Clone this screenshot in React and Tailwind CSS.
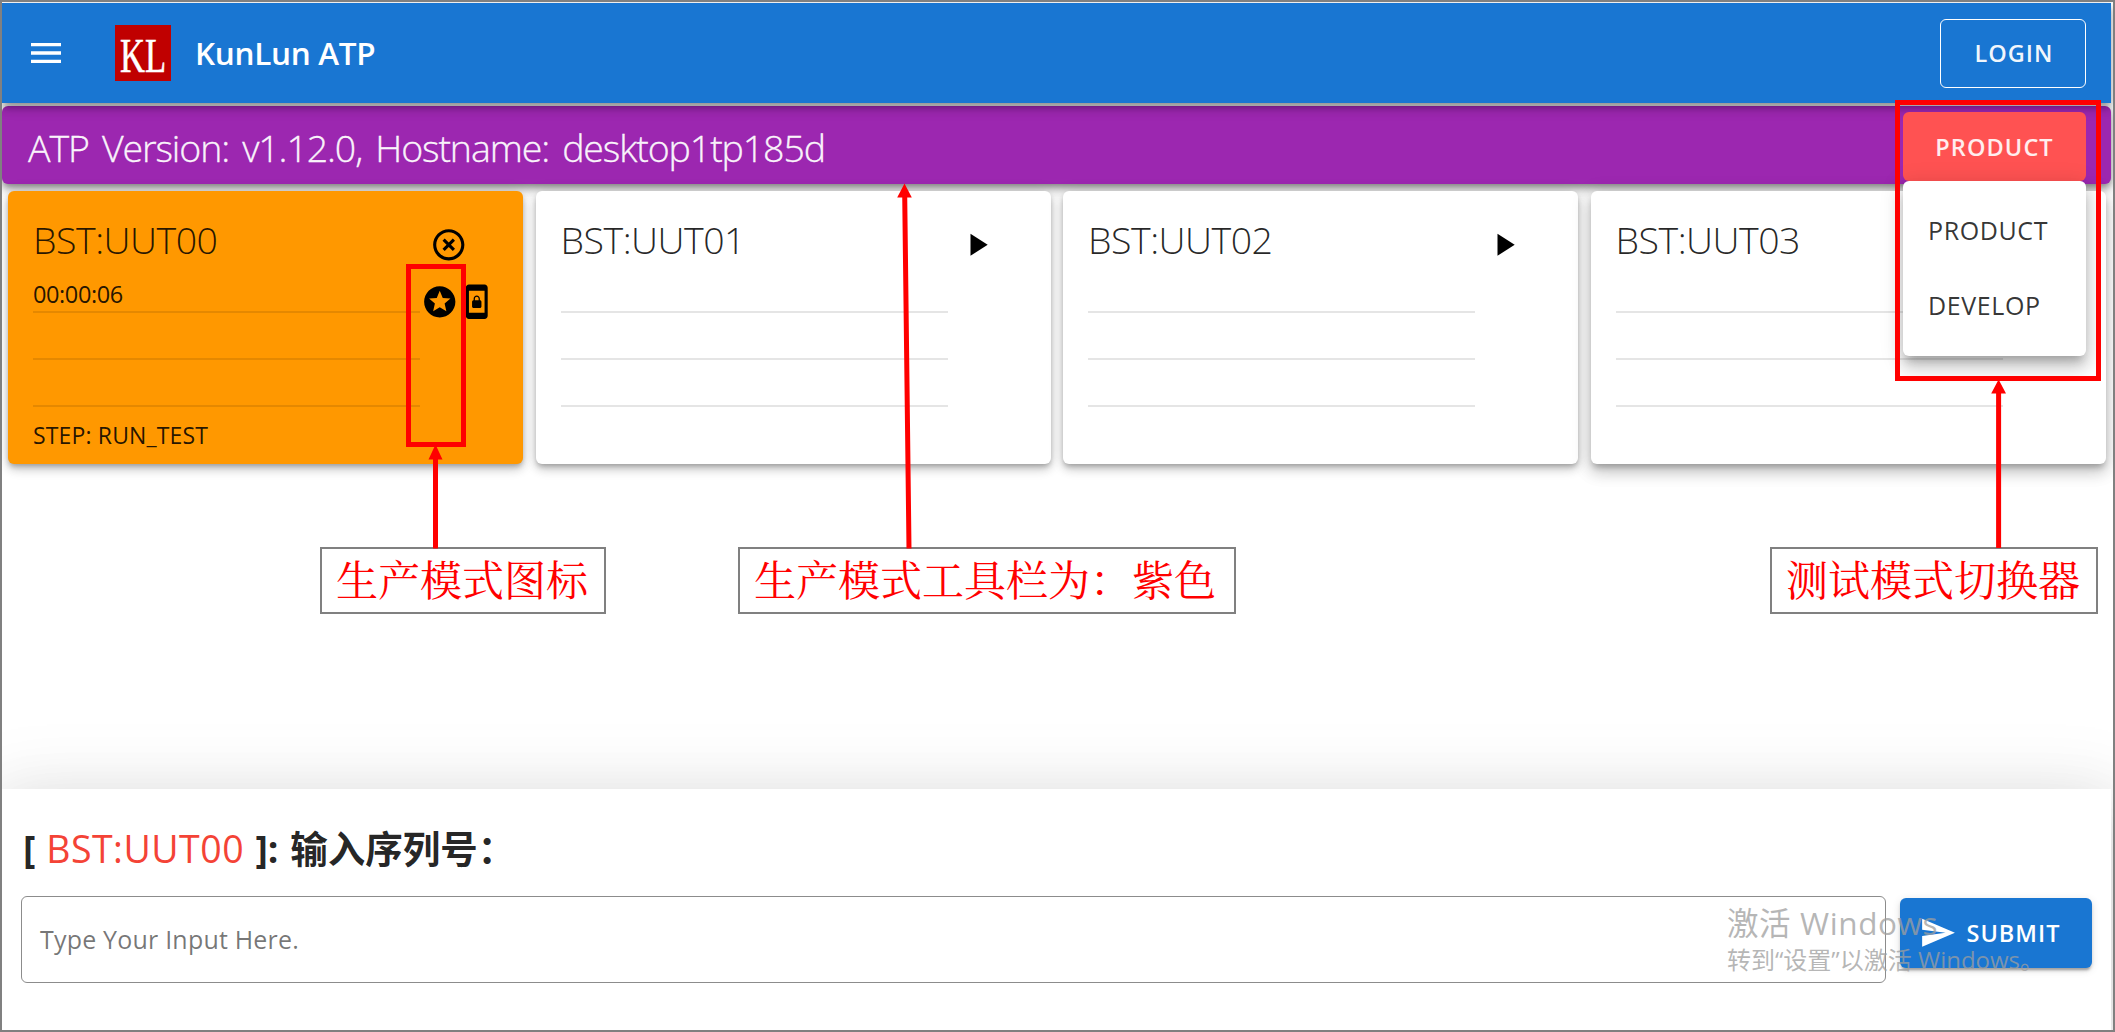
import React from "react";

function Icon({ d, className }) {
  return (
    <svg viewBox="0 0 24 24" className={className} fill="currentColor">
      <path d={d} />
    </svg>
  );
}

const PATHS = {
  menu: "M3 18h18v-2H3v2zm0-5h18v-2H3v2zm0-7v2h18V6H3z",
  cancel:
    "M14.59 8 12 10.59 9.41 8 8 9.41 10.59 12 8 14.59 9.41 16 12 13.41 14.59 16 16 14.59 13.41 12 16 9.41 14.59 8zM12 2C6.47 2 2 6.47 2 12s4.47 10 10 10 10-4.47 10-10S17.53 2 12 2zm0 18c-4.41 0-8-3.59-8-8s3.59-8 8-8 8 3.59 8 8-3.59 8-8 8z",
  play: "M8 5v14l11-7z",
  stars:
    "M11.99 2C6.47 2 2 6.48 2 12s4.47 10 9.99 10C17.52 22 22 17.52 22 12S17.52 2 11.99 2zm4.24 16L12 15.45 7.77 18l1.12-4.81-3.73-3.23 4.92-.42L12 5l1.92 4.53 4.92.42-3.73 3.23L16.23 18z",
  lock: "M10 16h4c.55 0 1-.45 1-1v-3c0-.55-.45-1-1-1v-1c0-1.11-.9-2-2-2-1.11 0-2 .9-2 2v1c-.55 0-1 .45-1 1v3c0 .55.45 1 1 1zm.8-6c0-.66.54-1.2 1.2-1.2s1.2.54 1.2 1.2v1h-2.4v-1zM17 1H7c-1.1 0-2 .9-2 2v18c0 1.1.9 2 2 2h10c1.1 0 2-.9 2-2V3c0-1.1-.9-2-2-2zm0 18H7V5h10v14z",
  send: "M2.01 21 23 12 2.01 3 2 10l15 2-15 2z",
};

const SLOTS = [
  { name: "BST:UUT00", running: true, time: "00:00:06", step: "STEP: RUN_TEST" },
  { name: "BST:UUT01" },
  { name: "BST:UUT02" },
  { name: "BST:UUT03", raised: true },
];

function SlotCard({ slot }) {
  const shadow = slot.raised
    ? "shadow-[0_5px_6px_-2px_rgba(0,0,0,0.26),0_8px_15px_1px_rgba(0,0,0,0.15),0_4px_20px_2px_rgba(0,0,0,0.11)]"
    : "shadow-[0_3px_5px_-1px_rgba(0,0,0,0.24),0_6px_8px_rgba(0,0,0,0.14),0_2px_16px_rgba(0,0,0,0.12)]";
  return (
    <div className={`h-[273px] w-[515px] rounded-[6px] pl-[25px] ${shadow} ${slot.running ? "bg-[#ff9800]" : "bg-white"}`}>
      <div className="flex h-[88px]">
        <div className="w-[388px] pt-[24px] text-[37.5px] leading-[50px] font-light tracking-[-0.5px] whitespace-nowrap text-black/85">
          {slot.name}
        </div>
        <Icon d={slot.running ? PATHS.cancel : PATHS.play} className="mt-[35px] ml-[9px] size-[37.5px]" />
      </div>
      <div className="flex">
        <div className="w-[387px]">
          <div className="h-[34px] border-b-2 border-black/10 text-[23.5px] leading-[30px] tracking-[-0.4px] text-black/87">
            {slot.time}
          </div>
          <div className="h-[47px] border-b-2 border-black/10" />
          <div className="h-[47px] border-b-2 border-black/10" />
          <div className="pt-[12px] text-[23px] leading-[32px] tracking-[0.15px] text-black/87">{slot.step}</div>
        </div>
        {slot.running && (
          <div className="flex pt-[4px] pl-[0.5px]">
            <Icon d={PATHS.stars} className="size-[37.5px]" />
            <Icon d={PATHS.lock} className="size-[37.5px]" />
          </div>
        )}
      </div>
    </div>
  );
}

function Callout({ className, children }) {
  return (
    <div
      className={`absolute top-[545px] flex h-[67px] items-center border-2 border-[#808080] bg-white pb-[5px] pl-[14px] font-['Noto_Serif_CJK_SC','Noto_Sans_CJK_SC',serif] text-[42px] leading-none whitespace-nowrap text-[#ff0000] ${className}`}
    >
      {children}
    </div>
  );
}

export default function App() {
  return (
    <div className="relative flex h-[1032px] w-[2115px] flex-col overflow-hidden border-2 border-[#808080] bg-white pr-[2px] font-['Open_Sans','Noto_Sans_CJK_SC',sans-serif]">
      <header className="relative z-10 mt-[1px] flex h-[100px] shrink-0 items-center bg-[#1976d2] pl-[24px] text-white shadow-[0_3px_6px_-1.5px_rgba(0,0,0,0.24),0_6px_8px_rgba(0,0,0,0.16),0_1.5px_16px_rgba(0,0,0,0.14)]">
        <Icon d={PATHS.menu} className="size-[40px]" />
        <div className="ml-[49px] flex size-[56px] items-center justify-center bg-[#c00000]">
          <span className="scale-x-72 pt-[5px] font-['Liberation_Serif',serif] text-[48px] leading-none [-webkit-text-stroke:0.6px_white]">
            KL
          </span>
        </div>
        <h1 className="ml-[24px] text-[31.5px] leading-[50px] font-semibold tracking-[-0.3px]">KunLun ATP</h1>
        <button className="mr-[25px] ml-auto h-[69px] w-[146px] rounded-[6px] border border-white pt-[2px] pl-[2px] text-[23.5px] font-semibold tracking-[1px] text-white/95">
          LOGIN
        </button>
      </header>

      <section className="mt-[3px] flex h-[78px] shrink-0 items-center rounded-[6px] bg-[#9c27b0] pl-[26px] shadow-[0_3px_6px_-1px_rgba(0,0,0,0.3),0_6px_8px_rgba(0,0,0,0.2),0_1.5px_16px_rgba(0,0,0,0.16)]">
        <div className="pt-[6px] text-[37.5px] leading-[50px] font-light tracking-[-1.1px] whitespace-nowrap text-white/95 [-webkit-text-stroke:0.3px_white] [word-spacing:4.5px]">
          ATP Version: v1.12.0, Hostname: desktop1tp185d
        </div>
        <div className="relative z-20 mt-[3px] mr-[25px] ml-auto">
          <button className="h-[69px] w-[183px] rounded-[6px] bg-[#ff5252] pt-[2px] text-[23.5px] font-semibold tracking-[1.1px] text-white/90">
            PRODUCT
          </button>
          <ul className="absolute top-[69px] left-0 h-[175px] w-[183px] rounded-[6px] bg-white pt-[12px] pl-[25px] text-[25px] tracking-[0.6px] text-black/80 shadow-[0_8px_8px_-4px_rgba(0,0,0,0.2),0_12px_16px_1px_rgba(0,0,0,0.14),0_4px_22px_3px_rgba(0,0,0,0.12)]">
            <li className="h-[75px] leading-[75px]">PRODUCT</li>
            <li className="h-[75px] leading-[75px]">DEVELOP</li>
          </ul>
        </div>
      </section>

      <main className="mt-[7px] flex shrink-0 gap-[12.5px] pl-[6px]">
        {SLOTS.map((s) => (
          <SlotCard key={s.name} slot={s} />
        ))}
      </main>

      <footer className="mt-auto h-[241px] shrink-0 bg-white px-[19px] pt-[34px] shadow-[0_17px_23px_-11px_rgba(0,0,0,0.1),0_20px_60px_4px_rgba(0,0,0,0.08),0_14px_72px_12px_rgba(0,0,0,0.1)]">
        <p className="flex h-[56px] pl-[2px] text-[37.5px] leading-[52px] font-bold whitespace-pre text-black/87">
          <span>[ </span>
          <span className="ml-[1px] font-normal tracking-[0.5px] text-[#f44336]">BST:UUT00</span>
          <span className="ml-[1.5px]"> ]: </span>
          <span className="ml-[2px]">输入序列号：</span>
        </p>
        <div className="mt-[17px] flex">
          <div className="h-[87px] w-[1865px] rounded-[6px] border border-black/45 pl-[18px] text-[25px] leading-[84px] tracking-[0.2px] text-black/55">
            Type Your Input Here.
          </div>
          <button className="mt-[2px] ml-[14px] flex h-[70px] w-[192px] items-center rounded-[6px] bg-[#1976d2] pl-[19px] text-[23.5px] font-semibold tracking-[1px] text-white shadow-[0_4px_2px_-2px_rgba(0,0,0,0.2),0_3px_3px_rgba(0,0,0,0.14),0_2px_8px_rgba(0,0,0,0.12)]">
            <Icon d={PATHS.send} className="size-[37.5px]" />
            <span className="ml-[10px] pt-[2px]">SUBMIT</span>
          </button>
        </div>
      </footer>

      <div className="absolute top-[901px] left-[1725px] z-30 whitespace-nowrap text-[#9e9e9e]/75">
        <p className="text-[31.5px] leading-[40px] tracking-[0.6px]">激活 Windows</p>
        <p className="text-[24px] leading-[34px]">转到“设置”以激活 Windows。</p>
      </div>

      <div className="absolute inset-0 z-40">
        <div className="absolute top-[262px] left-[404px] h-[183px] w-[60px] border-[5px] border-[#ff0000]" />
        <div className="absolute top-[98px] left-[1893px] h-[281px] w-[206px] border-[5px] border-[#ff0000]" />
        <Callout className="left-[318px] w-[286px]">生产模式图标</Callout>
        <Callout className="left-[736px] w-[498px]">生产模式工具栏为：紫色</Callout>
        <Callout className="left-[1768px] w-[328px]">测试模式切换器</Callout>
        <svg className="absolute -top-[2px] -left-[2px] h-[1032px] w-[2115px]" stroke="#ff0000" fill="#ff0000" strokeWidth="5">
          <path d="M435.5 455V548.5M904.7 195L909 548.5M1998.6 390V548" />
          <path stroke="none" d="M435.5 444.5l7 15h-14zM904.5 183.5l7.3 14h-14.6zM1998.6 379.5l7.4 14h-14.8z" />
        </svg>
      </div>
    </div>
  );
}
